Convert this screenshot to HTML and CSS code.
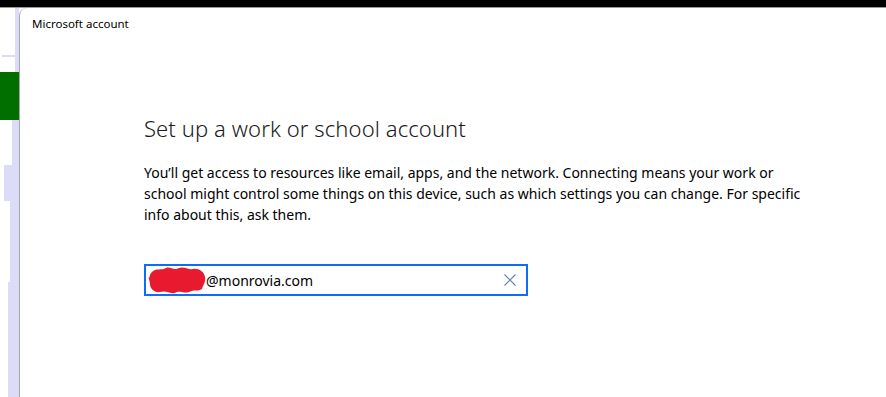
FILE: index.html
```html
<!DOCTYPE html>
<html lang="en">
<head>
    <meta charset="UTF-8">
    <title>Microsoft account</title>
    <link rel="stylesheet" href="styles.css">
</head>
<body>
    <div class="topbar"></div>

    <div class="desktop">
        <!-- what shows of the window behind -->
        <div class="behind">
            <div class="strip s1"></div>
            <div class="strip s2"></div>
            <div class="strip s3"></div>
            <div class="green"></div>
            <div class="strip s4"></div>
            <div class="strip s5"></div>
            <div class="strip s6"></div>
            <div class="strip s7"></div>
        </div>

        <div class="window">
            <div class="title">Microsoft account</div>

            <div class="content">
                <h1>Set up a work or school account</h1>
                <p class="info">You’ll get access to resources like email, apps, and the network. Connecting means your work or school might control some things on this device, such as which settings you can change. For specific info about this, ask them.</p>

                <div class="field">
                    <svg class="scribble" viewBox="0 0 58 30" xmlns="http://www.w3.org/2000/svg">
                        <path d="M3 8 C8 2 14 6 18 3 C22 1 26 6 31 3 C36 1 40 5 45 4 C50 3 56 6 57 12 C58 17 55 20 54 24 C50 27 46 24 41 27 C36 29 32 25 27 28 C22 29 18 25 12 27 C7 28 2 24 2 19 C1 14 1 11 3 8 Z" fill="#e81a30"/>
                        <path d="M1 14 C6 12 10 16 14 14" stroke="#e81a30" stroke-width="3" fill="none"/>
                    </svg>
                    <span class="value">@monrovia.com</span>
                    <svg class="clear" viewBox="0 0 12 12" xmlns="http://www.w3.org/2000/svg">
                        <path d="M0.5 0.5 L11.5 11.5 M11.5 0.5 L0.5 11.5" stroke="#5b83b3" stroke-width="1.1" fill="none"/>
                    </svg>
                </div>
            </div>
        </div>
    </div>
</body>
</html>
```

FILE: styles.css
```css
body {
    margin: 0;
    font-family: "Noto Sans", "Open Sans", sans-serif;
    background: #ffffff;
    color: #000000;
    height: 397px;
    overflow: hidden;
}

.topbar {
    height: 7px;
    background: #000000;
    border-bottom: 1px solid #9a9a9a;
}

.desktop {
    display: flex;
    height: 389px;
}

.behind {
    width: 19px;
    display: flex;
    flex-direction: column;
    align-items: flex-end;
    background: #ffffff;
}

.strip {
    background: #dcdcf9;
    flex: none;
}

.s1 { width: 4px; height: 47px; }
.s2 { width: 17px; height: 2px; }
.s3 { width: 4px; height: 15px; }
.green { width: 19px; height: 48px; background: #006f00; flex: none; }
.s4 { width: 7px; height: 45px; }
.s5 { width: 15px; height: 36px; }
.s6 { width: 9px; height: 81px; }
.s7 { width: 11px; height: 115px; }

.window {
    flex: 1;
    background: #ffffff;
    border-left: 1px solid #a8a8a8;
    border-top-left-radius: 8px;
}

.title {
    font-size: 11.5px;
    padding: 8px 0 0 12px;
    height: 22px;
}

.content {
    padding: 75px 0 0 124px;
}

h1 {
    margin: 0;
    font-size: 22px;
    font-weight: 300;
    line-height: 30px;
    letter-spacing: 0.1px;
    color: #1a1a1a;
}

.info {
    width: 665px;
    margin: 19px 0 0;
    font-size: 14px;
    line-height: 21px;
}

.field {
    width: 378px;
    height: 28px;
    margin-top: 39px;
    border: 2px solid #0f6cf5;
    display: flex;
    align-items: center;
    padding-left: 2px;
    box-sizing: content-box;
    font-size: 14px;
}

.scribble {
    width: 58px;
    height: 30px;
    flex: none;
}

.value {
    flex: 1;
}

.clear {
    width: 12px;
    height: 12px;
    margin-right: 10px;
}
```
